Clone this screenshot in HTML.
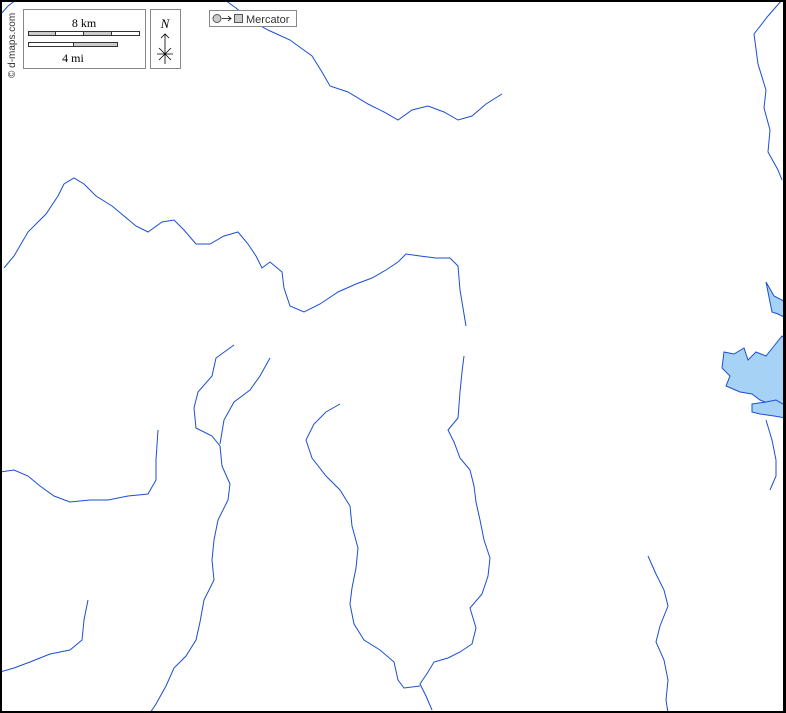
<!DOCTYPE html>
<html><head><meta charset="utf-8"><style>
html,body{margin:0;padding:0;background:#fff}
svg{display:block}
text{font-family:"Liberation Serif",serif}
</style></head><body>
<svg width="786" height="713" viewBox="0 0 786 713" xmlns="http://www.w3.org/2000/svg">
<rect x="0" y="0" width="786" height="713" fill="#fff"/>
<g fill="none" stroke="#1a4fd0" stroke-width="1">
<path d="M0,15 L8,6 L16,0"/>
<path d="M225,0 L236,8 L250,20 L268,30 L290,40 L312,56 L322,72 L330,86 L348,92 L368,104 L384,112 L398,120 L412,110 L428,106 L444,112 L458,120 L472,116 L486,104 L502,94"/>
<path d="M782,0 L768,16 L754,34 L758,64 L766,90 L764,108 L770,130 L768,152 L778,170 L782,180"/>
<path d="M4,268 L14,256 L28,232 L46,214 L58,196 L64,184 L74,178 L84,184 L96,196 L112,206 L124,216 L136,226 L148,232 L162,222 L174,220 L184,230 L196,244 L210,244 L224,236 L238,232 L248,244 L256,256 L262,268 L270,262 L282,272 L284,288 L290,306 L304,312 L320,304 L338,292 L356,284 L372,278 L386,270 L398,262 L406,254 L420,256 L436,258 L450,258 L458,266 L460,290 L466,326"/>
<path d="M464,356 L462,372 L460,392 L458,418 L448,430 L454,442 L460,458 L470,470 L474,486 L476,502 L480,520 L484,540 L490,558 L488,576 L482,594 L470,608 L476,628 L472,644 L460,652 L448,658 L434,662 L428,672 L420,684 L426,696 L432,710"/>
<path d="M340,404 L326,412 L314,424 L306,440 L312,458 L326,476 L340,490 L350,506 L352,526 L358,548 L356,568 L352,588 L350,604 L354,624 L364,640 L380,650 L394,662 L398,680 L404,688 L420,686"/>
<path d="M234,345 L216,358 L212,376 L198,392 L194,408 L196,428 L212,436 L220,446 L222,466 L230,484 L228,500 L218,520 L214,540 L212,560 L214,580 L204,600 L200,622 L196,640 L186,656 L174,668 L166,686 L156,704 L150,713"/>
<path d="M270,358 L260,376 L250,390 L234,402 L224,420 L220,444"/>
<path d="M158,430 L156,460 L156,480 L148,494 L128,496 L108,500 L90,500 L70,502 L54,496 L40,486 L28,476 L14,470 L0,472"/>
<path d="M88,600 L84,620 L82,640 L70,650 L50,654 L30,662 L14,668 L0,672"/>
<path d="M648,556 L656,574 L664,590 L668,606 L660,626 L656,642 L664,660 L668,680 L666,700 L668,713"/>
<path d="M766,420 L772,440 L776,460 L776,476 L770,490"/>
</g>
<g fill="#a6d3f5" stroke="#1a4fd0" stroke-width="1">
<path d="M766,282 L774,296 L782,300 L786,304 L786,318 L778,314 L772,312 Z"/>
<path d="M774,346 L782,336 L786,340 L786,414 L774,412 L770,404 L760,400 L752,394 L740,392 L726,386 L730,376 L722,368 L724,352 L734,354 L744,348 L748,360 L756,352 L766,356 Z"/>
<path d="M752,404 L766,402 L776,400 L786,406 L786,418 L774,416 L760,414 L752,412 Z"/>
</g>
<rect x="1" y="1" width="783" height="711" fill="none" stroke="#000" stroke-width="2"/>
<rect x="783" y="0" width="3" height="713" fill="#000"/>
<g>
<rect x="23.5" y="9.5" width="122" height="59" fill="#fff" stroke="#888"/>
<text x="84" y="27" font-size="12" text-anchor="middle" fill="#000">8 km</text>
<rect x="28.5" y="31.5" width="111" height="4" fill="#fff" stroke="#333"/>
<rect x="28.5" y="31.5" width="27" height="4" fill="#ccc" stroke="#333"/>
<rect x="83.5" y="31.5" width="28" height="4" fill="#ccc" stroke="#333"/>
<rect x="28.5" y="42.5" width="89" height="4" fill="#fff" stroke="#333"/>
<rect x="73.5" y="42.5" width="44" height="4" fill="#ccc" stroke="#333"/>
<text x="73" y="62" font-size="12" text-anchor="middle" fill="#000">4 mi</text>
<rect x="150.5" y="9.5" width="30" height="59" fill="#fff" stroke="#888"/>
<text x="165" y="28" font-size="13" font-style="italic" text-anchor="middle" fill="#000">N</text>
<path d="M165,34 L165,64 M161,38 L165,34 L169,38 M157,54 L173,54 M159,48 L171,60 M171,48 L159,60" stroke="#000" stroke-width="0.8" fill="none"/>
<rect x="209.5" y="10.5" width="87" height="16" fill="#fff" stroke="#888"/>
<circle cx="217" cy="18.5" r="4" fill="#ccc" stroke="#555"/>
<path d="M222,18.5 L231,18.5 M228,16 L231,18.5 L228,21" stroke="#000" fill="none" stroke-width="0.8"/>
<rect x="234.5" y="14.5" width="8" height="8" fill="#ccc" stroke="#555"/>
<text x="246" y="23" font-size="11" fill="#333" style="font-family:'Liberation Sans',sans-serif">Mercator</text>
<text transform="translate(15,78) rotate(-90)" font-size="10" fill="#333" style="font-family:'Liberation Sans',sans-serif">© d-maps.com</text>
</g>
</svg>
</body></html>
